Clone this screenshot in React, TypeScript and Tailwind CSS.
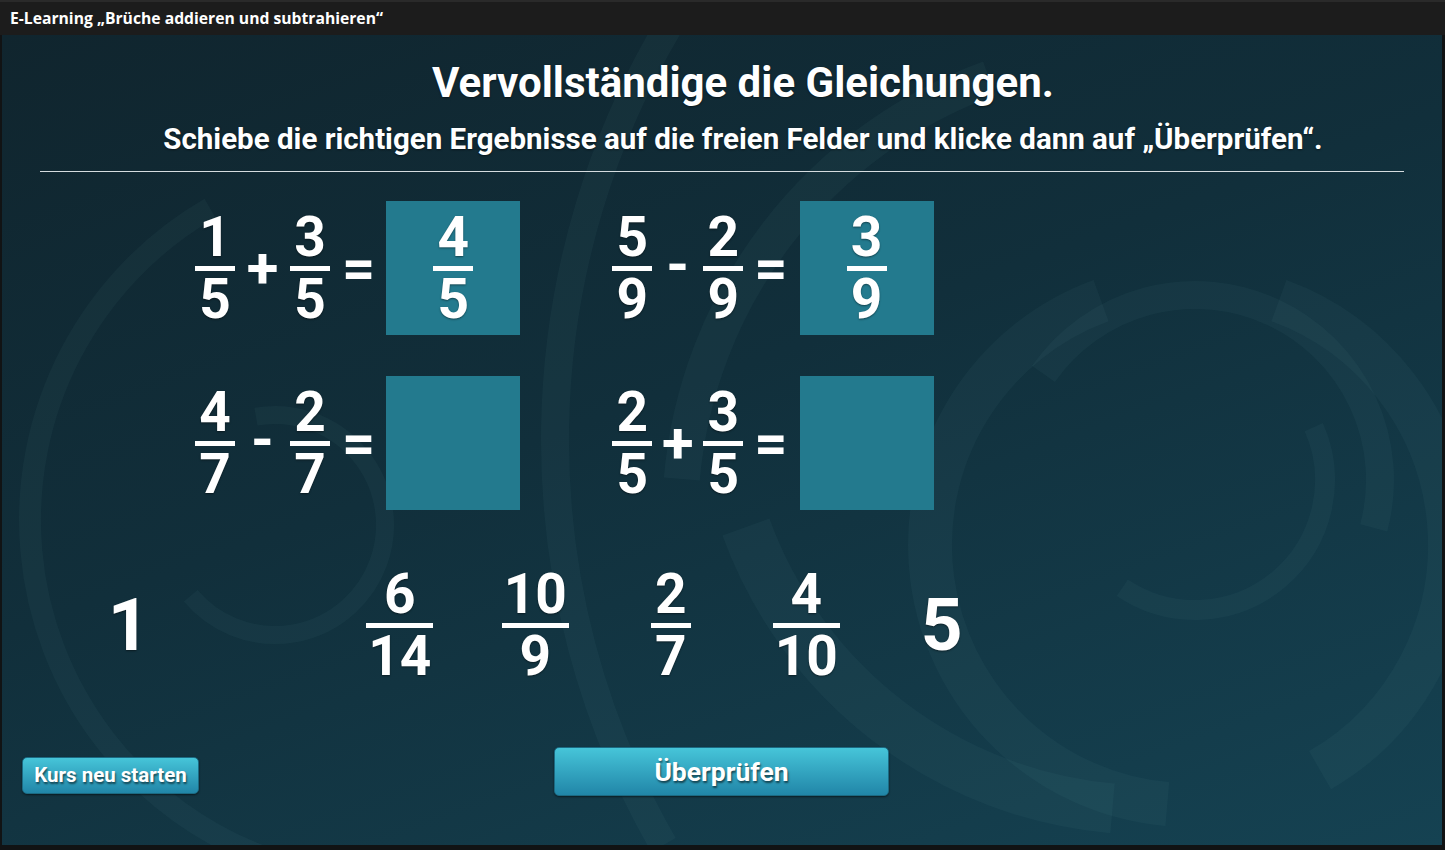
import type { ReactNode } from "react";

const FONT = "font-['Roboto','Liberation_Sans',sans-serif]";

/** Decorative rings in page coordinates: [cx, cy, r, startDeg, endDeg, stroke] */
const RINGS: [number, number, number, number, number, number][] = [
  [390, 520, 360, 110, 240, 22],
  [275, 525, 110, -100, 140, 18],
  [1365, 440, 810, 150, 212, 28],
  [1150, 520, 470, 185, 250, 36],
  [1195, 480, 130, -24, 124, 20],
  [1195, 480, 185, 215, 375, 28],
  [1190, 545, 260, 95, 250, 44],
  [1190, 545, 260, -70, 60, 44],
  [1150, 380, 430, 95, 160, 50],
];

function arcPath(cx: number, cy: number, r: number, a0: number, a1: number) {
  const rad = (a: number) => (a * Math.PI) / 180;
  const x0 = cx + r * Math.cos(rad(a0));
  const y0 = cy + r * Math.sin(rad(a0));
  const x1 = cx + r * Math.cos(rad(a1));
  const y1 = cy + r * Math.sin(rad(a1));
  const large = a1 - a0 > 180 ? 1 : 0;
  return `M${x0} ${y0} A${r} ${r} 0 ${large} 1 ${x1} ${y1}`;
}

function Backdrop() {
  return (
    <svg
      className="pointer-events-none absolute inset-0 h-full w-full"
      viewBox="2 35 1440 810"
      aria-hidden
    >
      {RINGS.map(([cx, cy, r, a0, a1, sw], i) => (
        <path
          key={i}
          d={arcPath(cx, cy, r, a0, a1)}
          fill="none"
          stroke="rgba(150,205,220,0.045)"
          strokeWidth={sw}
        />
      ))}
    </svg>
  );
}

function Frac({ n, d, wide = false }: { n: string; d: string; wide?: boolean }) {
  return (
    <div className="flex flex-col items-center text-[55px] leading-[44px] font-bold text-white [text-shadow:0_1px_2px_rgba(0,0,0,0.45)]">
      <span>{n}</span>
      <div className={`mt-[7px] h-[5px] bg-white ${wide ? "w-[67px]" : "w-[40px]"}`} />
      <span className="mt-[6px]">{d}</span>
    </div>
  );
}

function Op({ children, minus = false }: { children: ReactNode; minus?: boolean }) {
  return (
    <span
      className={`text-[58px] leading-none font-bold text-white ${minus ? "mb-[8px]" : ""}`}
    >
      {children}
    </span>
  );
}

function Box({ children }: { children?: ReactNode }) {
  return (
    <div className="flex h-[134px] w-[134px] items-center justify-center bg-[#237a8e]">
      {children}
    </div>
  );
}

type Eq = { a: [string, string]; op: string; b: [string, string]; res?: [string, string] };

function Equation({ eq, slot, eqGap, boxGap }: { eq: Eq; slot: string; eqGap: string; boxGap: string }) {
  return (
    <div className="flex items-center">
      <Frac n={eq.a[0]} d={eq.a[1]} />
      <div className={`flex justify-center ${slot}`}>
        <Op minus={eq.op === "-"}>{eq.op}</Op>
      </div>
      <Frac n={eq.b[0]} d={eq.b[1]} />
      <div className={eqGap}>
        <Op>=</Op>
      </div>
      <div className={boxGap}>
        <Box>{eq.res && <Frac n={eq.res[0]} d={eq.res[1]} />}</Box>
      </div>
    </div>
  );
}

const ROWS: [Eq, Eq][] = [
  [
    { a: ["1", "5"], op: "+", b: ["3", "5"], res: ["4", "5"] },
    { a: ["5", "9"], op: "-", b: ["2", "9"], res: ["3", "9"] },
  ],
  [
    { a: ["4", "7"], op: "-", b: ["2", "7"] },
    { a: ["2", "5"], op: "+", b: ["3", "5"] },
  ],
];

type Choice = { whole?: string; n?: string; d?: string } | null;

const CHOICES: Choice[] = [
  { whole: "1" },
  null,
  { n: "6", d: "14" },
  { n: "10", d: "9" },
  { n: "2", d: "7" },
  { n: "4", d: "10" },
  { whole: "5" },
];

export default function App() {
  return (
    <div className="flex h-[850px] w-[1445px] flex-col bg-[#111314]">
      <div className="flex h-[35px] items-center border-t-2 border-[#2a2a2a] bg-[#1c1c1c] pl-[10px] font-['Open_Sans',sans-serif] text-[15.7px] font-bold text-white">
        E-Learning „Brüche addieren und subtrahieren“
      </div>

      <main
        className={`relative ml-[2px] h-[810px] w-[1440px] overflow-hidden bg-[linear-gradient(160deg,#10252e_0%,#112f3b_45%,#154252_100%)] ${FONT}`}
      >
        <Backdrop />

        <div className="relative flex flex-col">
          <h1 className="pt-[23px] pl-[42px] text-center text-[42px] leading-[50px] font-bold text-white [text-shadow:0_1px_2px_rgba(0,0,0,0.5)]">
            Vervollständige die Gleichungen.
          </h1>
          <p className="mt-[12px] pl-[42px] text-center text-[29.5px] leading-[38px] font-bold text-white [text-shadow:0_1px_2px_rgba(0,0,0,0.5)]">
            Schiebe die richtigen Ergebnisse auf die freien Felder und klicke dann auf „Überprüfen“.
          </p>
          <div className="mx-[38px] mt-[13px] h-px bg-[#d5dcdf]" />

          <div className="mt-[29px] flex flex-col gap-[41px] pl-[193px]">
            {ROWS.map(([left, right], i) => (
              <div key={i} className="flex items-center">
                <Equation eq={left} slot="w-[55px]" eqGap="ml-[12px]" boxGap="ml-[11px]" />
                <div className="ml-[92px]">
                  <Equation eq={right} slot="w-[51px]" eqGap="ml-[11px]" boxGap="ml-[12px]" />
                </div>
              </div>
            ))}
          </div>

          <div className="mt-[62px] flex items-center pl-[59px]">
            {CHOICES.map((c, i) => (
              <div key={i} className="flex h-[106px] w-[135.5px] items-center justify-center">
                {c?.whole && (
                  <span className="text-[73px] leading-none font-bold text-white [text-shadow:0_1px_2px_rgba(0,0,0,0.45)]">
                    {c.whole}
                  </span>
                )}
                {c?.n && <Frac n={c.n} d={c.d!} wide={c.n.length > 1 || c.d!.length > 1} />}
              </div>
            ))}
          </div>

          <div className="mt-[69px] flex items-end pl-[20px]">
            <button className="mb-[2px] flex h-[37px] w-[177px] items-center justify-center rounded-[5px] border border-[#1c6a82] bg-gradient-to-b from-[#46c5d9] to-[#2186a8] text-[20.5px] font-bold text-white shadow-[0_1px_2px_rgba(0,0,0,0.5)] [text-shadow:1px_2px_2px_rgba(0,0,0,0.55)]">
              Kurs neu starten
            </button>
            <button className="ml-[355px] flex h-[49px] w-[335px] items-center justify-center rounded-[5px] border border-[#1c6a82] bg-gradient-to-b from-[#46c5d9] to-[#2186a8] text-[26.5px] font-bold text-white shadow-[0_1px_2px_rgba(0,0,0,0.5)] [text-shadow:1px_2px_2px_rgba(0,0,0,0.55)]">
              Überprüfen
            </button>
          </div>
        </div>
      </main>
    </div>
  );
}
